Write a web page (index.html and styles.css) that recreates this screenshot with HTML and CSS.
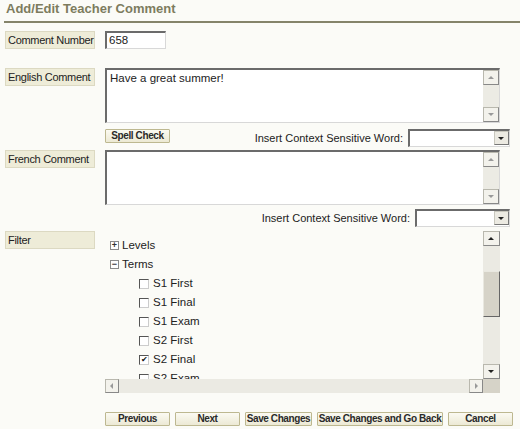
FILE: index.html
```html
<!DOCTYPE html>
<html>
<head>
<meta charset="utf-8">
<link rel="stylesheet" href="styles.css">
</head>
<body>
<div class="header"><h1 class="title">Add/Edit Teacher Comment</h1></div>
<div class="form">
  <div class="row r-number">
    <div class="label">Comment Number</div>
    <div class="field"><div class="textinput">658</div></div>
  </div>

  <div class="row r-english">
    <div class="label">English Comment</div>
    <div class="field">
      <div class="textbox">
        <div class="tb-text">Have a great summer!</div>
        <div class="vscroll">
          <div class="arrow up"></div>
          <div class="track"></div>
          <div class="arrow down"></div>
        </div>
      </div>
      <div class="subrow">
        <button class="btn spell">Spell Check</button>
        <div class="insert">
          <span class="insert-label">Insert Context Sensitive Word:</span>
          <div class="select s1"><div class="sel-btn"></div></div>
        </div>
      </div>
    </div>
  </div>

  <div class="row r-french">
    <div class="label">French Comment</div>
    <div class="field">
      <div class="textbox">
        <div class="tb-text"></div>
        <div class="vscroll">
          <div class="arrow up"></div>
          <div class="track"></div>
          <div class="arrow down"></div>
        </div>
      </div>
      <div class="subrow end">
        <div class="insert">
          <span class="insert-label">Insert Context Sensitive Word:</span>
          <div class="select s2"><div class="sel-btn"></div></div>
        </div>
      </div>
    </div>
  </div>

  <div class="row r-filter">
    <div class="label">Filter</div>
    <div class="field">
      <div class="filterbox">
        <div class="fb-main">
          <div class="tree">
            <div class="node"><span class="exp">+</span>Levels</div>
            <div class="node"><span class="exp">&minus;</span>Terms</div>
            <div class="leaf"><span class="cb"></span>S1 First</div>
            <div class="leaf"><span class="cb"></span>S1 Final</div>
            <div class="leaf"><span class="cb"></span>S1 Exam</div>
            <div class="leaf"><span class="cb"></span>S2 First</div>
            <div class="leaf"><span class="cb checked">&#10004;</span>S2 Final</div>
            <div class="leaf"><span class="cb"></span>S2 Exam</div>
          </div>
          <div class="vscroll tall">
            <div class="arrow up dark"></div>
            <div class="track t1"></div>
            <div class="thumb"></div>
            <div class="track"></div>
            <div class="arrow down dark"></div>
          </div>
        </div>
        <div class="hscroll">
          <div class="harrow left"></div>
          <div class="htrack"></div>
          <div class="harrow right"></div>
          <div class="corner"></div>
        </div>
      </div>
    </div>
  </div>

  <div class="buttons">
    <button class="btn b-prev">Previous</button>
    <button class="btn b-next">Next</button>
    <button class="btn b-save">Save Changes</button>
    <button class="btn b-saveback">Save Changes and Go Back</button>
    <button class="btn b-cancel">Cancel</button>
  </div>
</div>
</body>
</html>
```

FILE: styles.css
```css
html, body {
  margin: 0;
  padding: 0;
  background: #fbfbf7;
  font-family: "Liberation Sans", Arial, sans-serif;
  font-size: 11px;
  color: #222;
}

.header {
  margin-left: 4px;
  padding-left: 2px;
  height: 21px;
  border-bottom: 2px solid #85846a;
}
.title {
  margin: 0;
  font-size: 13px;
  font-weight: bold;
  line-height: 17px;
  color: #7d7c5e;
}

.form {
  padding-left: 5px;
}

.row {
  display: grid;
  grid-template-columns: 90px 405px;
  column-gap: 10px;
  align-items: start;
}
.r-number { margin-top: 8px; }
.r-english { margin-top: 19px; }
.r-french { margin-top: 3px; }
.r-filter { margin-top: 4px; }

.label {
  box-sizing: border-box;
  height: 18px;
  line-height: 16px;
  padding-left: 2px;
  font-size: 11px;
  letter-spacing: -0.3px;
  background: #eeecd8;
  border: 1px solid #dcd9c2;
  color: #222;
  white-space: nowrap;
}

.textinput {
  box-sizing: border-box;
  width: 61px;
  height: 18px;
  background: #fff;
  border-top: 2px solid #6b6b6b;
  border-left: 2px solid #6b6b6b;
  border-right: 1px solid #d8d8d8;
  border-bottom: 1px solid #d8d8d8;
  padding-left: 2px;
  line-height: 14px;
  font-size: 11.5px;
}

.textbox {
  box-sizing: border-box;
  width: 395px;
  height: 55px;
  display: flex;
  background: #fff;
  border-top: 2px solid #6b6b6b;
  border-left: 2px solid #6b6b6b;
  border-right: 1px solid #d8d8d8;
  border-bottom: 1px solid #d8d8d8;
}
.tb-text {
  flex: 1;
  padding: 1px 3px;
  line-height: 14px;
  font-size: 11.5px;
}

.vscroll {
  width: 16px;
  display: flex;
  flex-direction: column;
  background: #ecebe4;
}
.arrow {
  box-sizing: border-box;
  height: 15px;
  background: #f3f2ec;
  border: 1px solid #b9b8ae;
  border-right-color: #888;
  border-bottom-color: #888;
  position: relative;
}
.arrow::after {
  content: "";
  position: absolute;
  left: 4px;
  top: 5px;
  border-left: 3px solid transparent;
  border-right: 3px solid transparent;
}
.arrow.up::after { border-bottom: 3px solid #999; }
.arrow.down::after { border-top: 3px solid #999; }
.arrow.dark::after { border-bottom-color: #222; border-top-color: #222; }
.track { flex: 1; }
.t1 { flex: 0 0 25px; }

.subrow {
  margin-top: 6px;
  height: 18px;
  display: flex;
  justify-content: space-between;
  align-items: flex-start;
}
.subrow.end { justify-content: flex-end; margin-top: 4px; }
.insert {
  display: flex;
  align-items: center;
  gap: 5px;
}
.insert-label {
  line-height: 18px;
}
.select {
  box-sizing: border-box;
  height: 18px;
  background: #fff;
  border-top: 2px solid #6b6b6b;
  border-left: 2px solid #6b6b6b;
  border-right: 1px solid #d8d8d8;
  border-bottom: 1px solid #d8d8d8;
  display: flex;
  justify-content: flex-end;
}
.s1 { width: 102px; }
.s2 { width: 95px; }
.sel-btn {
  box-sizing: border-box;
  width: 15px;
  height: 14px;
  background: #eceae2;
  border: 1px solid #c8c7bd;
  border-right-color: #777;
  border-bottom-color: #777;
  position: relative;
}
.sel-btn::after {
  content: "";
  position: absolute;
  left: 3px;
  top: 5px;
  border-left: 3px solid transparent;
  border-right: 3px solid transparent;
  border-top: 3px solid #222;
}

.btn {
  box-sizing: border-box;
  height: 14px;
  padding: 0;
  margin: 0;
  font-family: "Liberation Sans", Arial, sans-serif;
  font-size: 10px;
  font-weight: bold;
  letter-spacing: -0.4px;
  line-height: 12px;
  color: #2a2a2a;
  background: linear-gradient(#fbfaf2, #ece9d4);
  border: 1px solid #bdb890;
  border-radius: 1px;
  white-space: nowrap;
}
.spell { width: 65px; }

.filterbox {
  width: 395px;
  height: 162px;
  display: flex;
  flex-direction: column;
}
.fb-main {
  flex: 1;
  display: flex;
  overflow: hidden;
}
.tree {
  flex: 1;
  padding: 5px 0 0 5px;
  overflow: hidden;
  font-size: 11.5px;
}
.node, .leaf {
  height: 19px;
  line-height: 19px;
  display: flex;
  align-items: center;
  white-space: nowrap;
}
.exp {
  box-sizing: border-box;
  width: 9px;
  height: 9px;
  border: 1px solid #8a8a8a;
  background: #fff;
  font-size: 9px;
  line-height: 6px;
  text-align: center;
  font-weight: bold;
  color: #333;
  margin-right: 3px;
}
.leaf { padding-left: 29px; }
.cb {
  box-sizing: border-box;
  width: 10px;
  height: 10px;
  background: #fff;
  border-top: 1px solid #555;
  border-left: 1px solid #555;
  border-right: 1px solid #ccc;
  border-bottom: 1px solid #ccc;
  margin-right: 4px;
  font-size: 8px;
  line-height: 8px;
  text-align: center;
  color: #111;
}
.vscroll.tall {
  width: 17px;
  background: #ebeae3;
}
.thumb {
  box-sizing: border-box;
  height: 46px;
  background: #d6d3c8;
  border: 1px solid #e9e8e0;
  border-right-color: #666;
  border-bottom-color: #666;
}

.hscroll {
  height: 14px;
  display: flex;
  background: #ebeae3;
}
.harrow {
  box-sizing: border-box;
  width: 14px;
  height: 14px;
  background: #f3f2ec;
  border: 1px solid #b9b8ae;
  border-right-color: #888;
  border-bottom-color: #888;
  position: relative;
}
.harrow::after {
  content: "";
  position: absolute;
  top: 3px;
  border-top: 3px solid transparent;
  border-bottom: 3px solid transparent;
}
.harrow.left::after { left: 4px; border-right: 3px solid #999; }
.harrow.right::after { left: 5px; border-left: 3px solid #999; }
.htrack { flex: 1; }
.corner {
  width: 17px;
  background: #d6d3c8;
}

.buttons {
  margin-top: 19px;
  margin-left: 100px;
  display: flex;
  gap: 5px;
}
.b-prev, .b-next, .b-cancel { width: 65px; }
.b-save { width: 67px; }
.b-saveback { width: 126px; }
```
